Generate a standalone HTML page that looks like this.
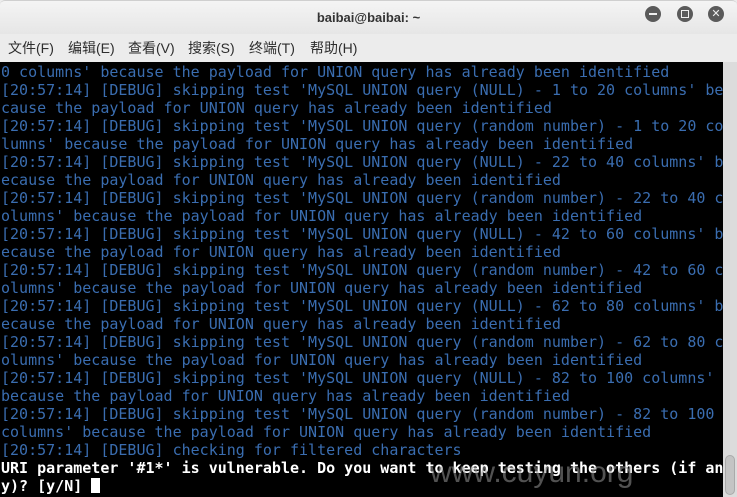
<!DOCTYPE html>
<html><head><meta charset="utf-8"><style>
html,body{margin:0;padding:0;width:737px;height:497px;overflow:hidden;background:#ececec}
.title{position:absolute;left:0;top:0;width:737px;height:34px;background:linear-gradient(#f4f4f4,#e6e6e6);border-radius:5px 5px 0 0;border-top:1px solid #cfcfcf;box-sizing:border-box}
.title span{position:absolute;left:0;width:737px;text-align:center;top:9px;font:bold 13px "Liberation Sans","DejaVu Sans",sans-serif;color:#333}
.btn{position:absolute;top:5px;width:16px;height:16px;border-radius:50%;background:#5a5a5a}
.menu{position:absolute;left:0;top:34px;width:737px;height:28px;background:#ececec;font:14px "Liberation Sans","Noto Sans CJK SC",sans-serif;color:#2e2e2e}
.menu span{position:absolute;top:4px}
.term{position:absolute;left:0;top:62px;width:723px;height:435px;background:#000}
pre{margin:0;position:absolute;left:1px;top:1px;font:15px/18px "DejaVu Sans Mono","Liberation Mono",monospace;color:#3a6db0}
.w{color:#fff;font-weight:bold}
.sb{position:absolute;left:723px;top:62px;width:14px;height:435px;background:#dcdcdc}
.th{position:absolute;left:725px;top:455px;width:10px;height:40px;border-radius:5px;background:#c4c4c4;border:1px solid #aaa;box-sizing:border-box}
.cur{display:inline-block;width:9px;height:15px;background:#fff;vertical-align:-2px}
.wm{position:absolute;left:430px;font:30px "Liberation Sans",sans-serif;color:rgba(150,150,150,.55)}
</style></head><body>
<div class="title"><span>baibai@baibai: ~</span>
<div class="btn" style="left:645px"><div style="position:absolute;left:4px;top:7px;width:8px;height:2px;background:#eee"></div></div>
<div class="btn" style="left:677px"><div style="position:absolute;left:4px;top:4px;width:6px;height:6px;border:1px solid #eee"></div></div>
<div class="btn" style="left:708px;color:#eee;font:bold 11px 'DejaVu Sans',sans-serif;text-align:center;line-height:16px">✕</div>
</div>
<div class="menu">
<span style="left:8px">文件(F)</span><span style="left:68px">编辑(E)</span><span style="left:128px">查看(V)</span><span style="left:188px">搜索(S)</span><span style="left:249px">终端(T)</span><span style="left:310px">帮助(H)</span>
</div>
<div class="term"><pre>0 columns' because the payload for UNION query has already been identified
[20:57:14] [DEBUG] skipping test 'MySQL UNION query (NULL) - 1 to 20 columns' be
cause the payload for UNION query has already been identified
[20:57:14] [DEBUG] skipping test 'MySQL UNION query (random number) - 1 to 20 co
lumns' because the payload for UNION query has already been identified
[20:57:14] [DEBUG] skipping test 'MySQL UNION query (NULL) - 22 to 40 columns' b
ecause the payload for UNION query has already been identified
[20:57:14] [DEBUG] skipping test 'MySQL UNION query (random number) - 22 to 40 c
olumns' because the payload for UNION query has already been identified
[20:57:14] [DEBUG] skipping test 'MySQL UNION query (NULL) - 42 to 60 columns' b
ecause the payload for UNION query has already been identified
[20:57:14] [DEBUG] skipping test 'MySQL UNION query (random number) - 42 to 60 c
olumns' because the payload for UNION query has already been identified
[20:57:14] [DEBUG] skipping test 'MySQL UNION query (NULL) - 62 to 80 columns' b
ecause the payload for UNION query has already been identified
[20:57:14] [DEBUG] skipping test 'MySQL UNION query (random number) - 62 to 80 c
olumns' because the payload for UNION query has already been identified
[20:57:14] [DEBUG] skipping test 'MySQL UNION query (NULL) - 82 to 100 columns'
because the payload for UNION query has already been identified
[20:57:14] [DEBUG] skipping test 'MySQL UNION query (random number) - 82 to 100
columns' because the payload for UNION query has already been identified
[20:57:14] [DEBUG] checking for filtered characters
<span class="w">URI parameter '#1*' is vulnerable. Do you want to keep testing the others (if an
y)? [y/N] </span><span class="cur"></span></pre>
<div class="wm" style="top:394px">www.cuyun.org</div>
</div>
<div class="sb"></div><div class="th"></div>
</body></html>
